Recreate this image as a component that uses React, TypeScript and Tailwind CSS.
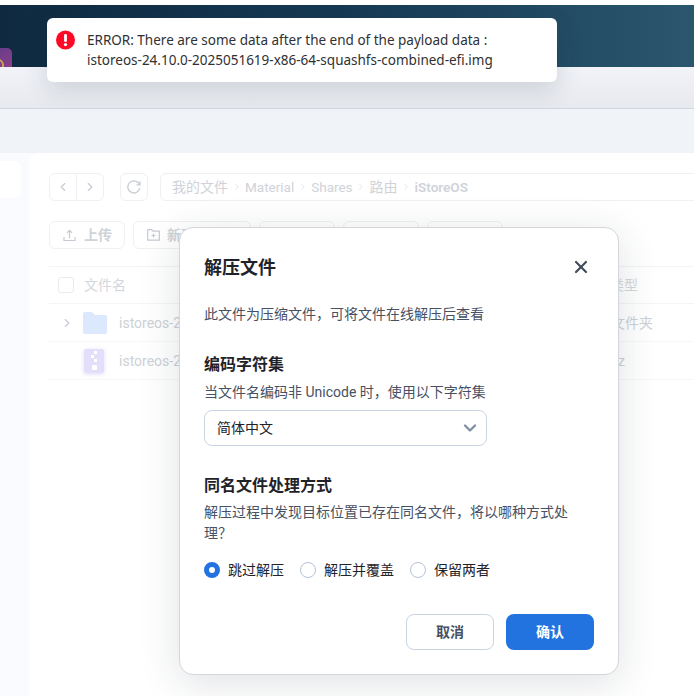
import React from "react";
import { ChevronLeft, ChevronRight, X, ChevronDown } from "lucide-react";

function Sep() {
  return <span className="flex w-[17px] justify-center text-[#d5d9df]"><ChevronRight size={10} strokeWidth={1.6} /></span>;
}

function ToolBtn({ w, children }: { w: string; children?: React.ReactNode }) {
  return (
    <div className={`flex h-[28px] items-center rounded-[6px] border border-[#eef0f3] pl-[13px] text-[14px] font-semibold text-[#cfd3d9] ${w}`}>
      {children}
    </div>
  );
}

function Radio({ on, label }: { on?: boolean; label: string }) {
  return (
    <span className="flex items-center gap-[8px] leading-[22px]">
      <span className={on ? "h-[16px] w-[16px] rounded-full border-[5px] border-[#2272e0] bg-white" : "h-[16px] w-[16px] rounded-full border border-[#b4c2d6] bg-white"} />
      {label}
    </span>
  );
}

export default function App() {
  return (
    <div className="relative flex h-[696px] w-[694px] flex-col overflow-hidden bg-white font-['Roboto','Noto_Sans_CJK_SC',sans-serif]">
      <div className="h-[5px] shrink-0 bg-white" />
      <div className="relative h-[62px] shrink-0 bg-gradient-to-r from-[#0f2a40] via-[#163a54] to-[#2b566e]">
        <div className="absolute left-[-16px] top-[43px] h-[19px] w-[28px] overflow-hidden rounded-tr-[5px] bg-gradient-to-br from-[#5c3a8c] to-[#8a3f86]">
          <div className="absolute left-[8px] top-[11px] h-[14px] w-[12px] rounded-full border-2 border-[#c9a25a]" />
        </div>
      </div>
      <div className="h-[42px] shrink-0 border-b border-[#d3d6dc] bg-gradient-to-b from-[#f1f3f8] to-[#e7e9ee]" />
      <div className="h-[44px] shrink-0 bg-[#f0f3f8]" />

      <div className="flex min-h-0 flex-1 gap-[8px] bg-[#f9fbfe]">
        <div className="mt-[8px] h-[37px] w-[21px] shrink-0 rounded-r-[6px] bg-white" />
        <main className="min-w-0 flex-1 rounded-tl-[10px] bg-white pl-[20px] text-[#c6cbd3]">
          <div className="flex items-center pt-[20px]">
            <div className="flex h-[28px] w-[55px] shrink-0 items-center rounded-[6px] border border-[#eef0f3]">
              <span className="flex h-full w-[27px] items-center justify-center border-r border-[#eef0f3]"><ChevronLeft size={14} /></span>
              <span className="flex h-full flex-1 items-center justify-center"><ChevronRight size={14} /></span>
            </div>
            <div className="ml-[16px] flex h-[28px] w-[28px] shrink-0 items-center justify-center rounded-[6px] border border-[#eef0f3]">
              <svg width="16" height="16" viewBox="0 0 16 16" fill="none" stroke="#c6cbd3" strokeWidth="1.3">
                <path d="M13.6 9.6A6 6 0 1 1 9.5 2.2a6 6 0 0 1 4 3.3" strokeLinecap="round" />
                <path d="M14 2.8v3h-3" strokeLinecap="round" strokeLinejoin="round" />
              </svg>
            </div>
            <div className="ml-[12px] flex h-[28px] w-[560px] shrink-0 items-center rounded-[6px] border border-[#eef0f3] pl-[11px] text-[14px] text-[#cfd3d9]">
              <span>我的文件</span><Sep /><span className="text-[13.5px]">Material</span><Sep /><span className="text-[13.5px]">Shares</span><Sep /><span>路由</span><Sep /><span className="text-[13.5px] font-semibold">iStoreOS</span>
            </div>
          </div>

          <div className="mt-[20px] flex gap-[8px]">
            <ToolBtn w="w-[76px]">
              <svg width="13" height="13" viewBox="0 0 13 13" fill="none" stroke="#c6cbd3" strokeWidth="1.2" className="mr-[8px]">
                <path d="M6.5 9V1.5M4 3.8l2.5-2.4L9 3.8M1 8v3.5h11V8" />
              </svg>
              上传
            </ToolBtn>
            <ToolBtn w="w-[118px]">
              <svg width="13" height="12" viewBox="0 0 13 12" fill="none" stroke="#c6cbd3" strokeWidth="1.2" className="mr-[7px]">
                <path d="M.7.7h4l1.2 1.5h6.4v9H.7zM6.5 4.5v4M4.5 6.5h4" />
              </svg>
              新建文件夹
            </ToolBtn>
            <ToolBtn w="w-[76px]" />
            <ToolBtn w="w-[76px]" />
            <ToolBtn w="w-[76px]" />
          </div>

          <div className="mt-[17px] flex h-[38px] items-center border-y border-[#f3f4f6] pl-[9px] text-[14px] text-[#d3d7dc]">
            <span className="h-[16px] w-[16px] rounded-[3px] border border-[#e9ebef]" />
            <span className="ml-[10px]">文件名</span>
            <span className="ml-auto mr-[56px]">类型</span>
          </div>
          <div className="flex h-[38px] items-center border-b border-[#f6f7f8] pl-[11px] text-[14px] text-[#cdd1d6]">
            <ChevronRight size={14} className="text-[#c6cbd3]" />
            <svg width="24" height="22" viewBox="0 0 24 22" className="ml-[9px] shrink-0">
              <path d="M0 2a2 2 0 0 1 2-2h7l3 3h10a2 2 0 0 1 2 2v15a2 2 0 0 1-2 2H2a2 2 0 0 1-2-2z" fill="#dbe8fd" />
            </svg>
            <span className="ml-[12px] mt-[2px]">istoreos-2</span>
            <span className="ml-auto mr-[41px] mt-[2px]">文件夹</span>
          </div>
          <div className="flex h-[38px] items-center border-b border-[#f6f7f8] pl-[35px] text-[14px] text-[#cdd1d6]">
            <svg width="20" height="24" viewBox="0 0 20 24" className="shrink-0 drop-shadow-[0_1px_2px_rgba(190,180,250,0.5)]">
              <rect x="0" y="0" width="20" height="24" rx="2" fill="#e3dffb" />
              <rect x="10" y="2" width="3" height="3" fill="#fff" />
              <rect x="7" y="6" width="3" height="3" fill="#fff" />
              <rect x="10" y="10" width="3" height="3" fill="#fff" />
              <rect x="8" y="16" width="5" height="5" rx="1" fill="#fff" />
            </svg>
            <span className="ml-[15px] mt-[2px]">istoreos-2</span>
            <span className="ml-auto mr-[69px] mt-[2px]">z</span>
          </div>
        </main>
      </div>

      {/* toast */}
      <div className="absolute left-[47px] top-[18px] flex h-[64px] w-[510px] items-start rounded-[6px] bg-white pl-[9px] pt-[12px] shadow-[0_8px_24px_rgba(40,50,70,0.16)]">
        <svg width="20" height="20" viewBox="0 0 20 20" className="shrink-0">
          <circle cx="9.5" cy="10" r="9.5" fill="#ff0a26" />
          <rect x="8.1" y="4" width="2.8" height="8" rx="1.3" fill="#fff" />
          <circle cx="9.5" cy="14.6" r="1.6" fill="#fff" />
        </svg>
        <div className="ml-[11px] font-['Noto_Sans',sans-serif] text-[13.5px] leading-[20px] text-[#303133]">
          <div>ERROR: There are some data after the end of the payload data :</div>
          <div>istoreos-24.10.0-2025051619-x86-64-squashfs-combined-efi.img</div>
        </div>
      </div>

      {/* modal */}
      <div className="absolute left-[179px] top-[227px] flex h-[448px] w-[440px] flex-col rounded-[14px] border border-[#d4d6da] bg-white px-[24px] shadow-[0_8px_40px_rgba(30,40,60,0.14)]">
        <div className="flex items-center justify-between pt-[26px]">
          <h2 className="text-[18px] leading-[28px] font-bold text-[#1f2329]">解压文件</h2>
          <X size={20} strokeWidth={2.6} className="mr-[3px] mt-[-2px] text-[#414b5c]" />
        </div>
        <p className="mt-[21px] text-[14px] leading-[22px] text-[#475163]">此文件为压缩文件，可将文件在线解压后查看</p>
        <h3 className="mt-[28px] text-[16px] leading-[24px] font-bold text-[#1f2329]">编码字符集</h3>
        <p className="mt-[4px] text-[14px] leading-[22px] text-[#475163]">当文件名编码非 Unicode 时，使用以下字符集</p>
        <div className="mt-[7px] flex h-[36px] w-[283px] items-center justify-between rounded-[8px] border border-[#c9d4e2] pl-[12px] pr-[6px] text-[14px] text-[#1f2329]">
          简体中文
          <ChevronDown size={20} strokeWidth={2.8} className="text-[#7f8fa6]" />
        </div>
        <h3 className="mt-[28px] text-[16px] leading-[24px] font-bold text-[#1f2329]">同名文件处理方式</h3>
        <p className="mt-[4px] max-w-[380px] text-[14px] leading-[21px] text-[#475163]">解压过程中发现目标位置已存在同名文件，将以哪种方式处理？</p>
        <div className="mt-[15px] flex items-center gap-[16px] text-[14px] text-[#1f2329]">
          <Radio on label="跳过解压" />
          <Radio label="解压并覆盖" />
          <Radio label="保留两者" />
        </div>
        <div className="mt-auto flex justify-end gap-[12px] pb-[24px]">
          <button className="h-[36px] w-[88px] rounded-[8px] border border-[#c9d4e2] bg-white text-[14px] font-bold text-[#475163]">取消</button>
          <button className="h-[36px] w-[88px] rounded-[8px] bg-[#2272e0] text-[14px] font-bold text-white">确认</button>
        </div>
      </div>
    </div>
  );
}
